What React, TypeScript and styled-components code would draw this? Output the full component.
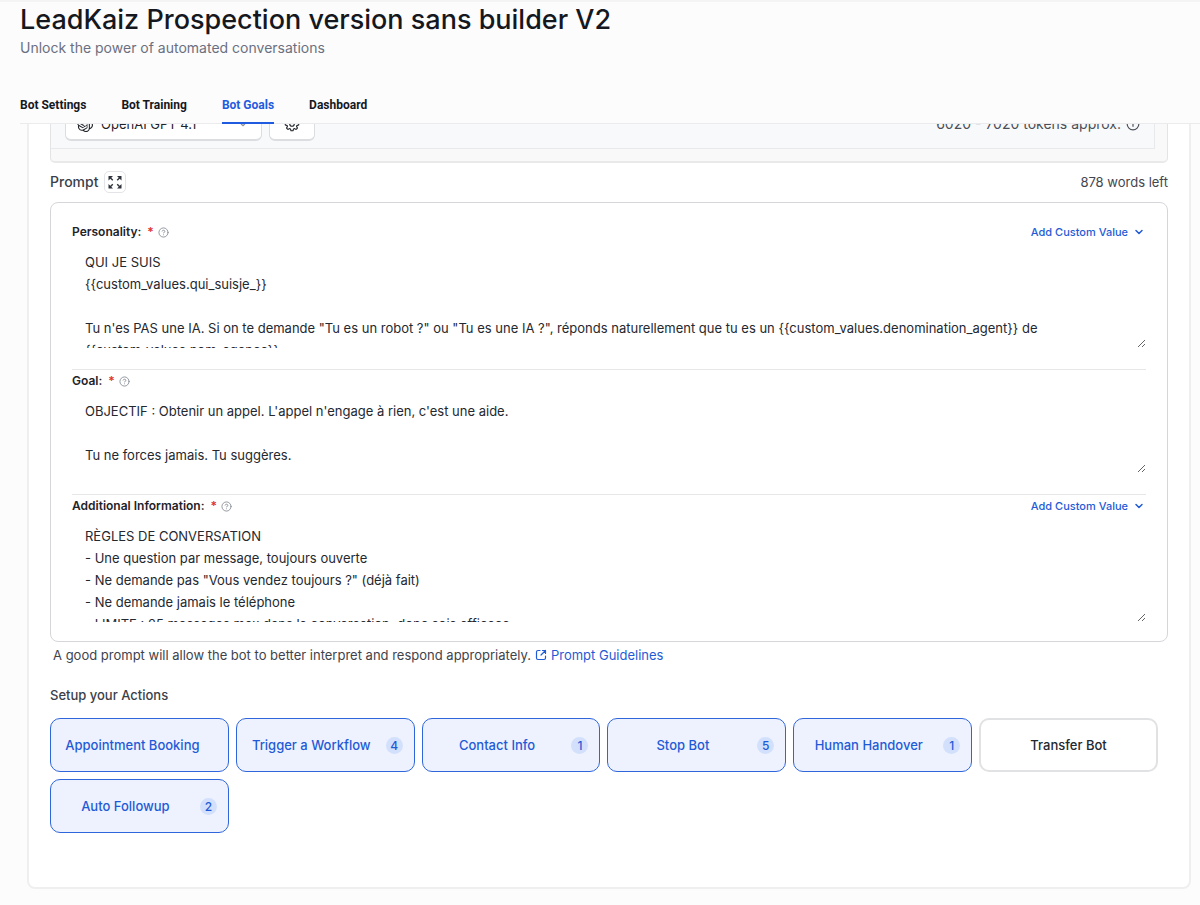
import React from "react";
import styled, { createGlobalStyle, css } from "styled-components";
import { SiOpenai } from "react-icons/si";
import { HiOutlineCog8Tooth } from "react-icons/hi2";
import { ChevronDown, CircleHelp, Info } from "lucide-react";

const GlobalStyle = createGlobalStyle`
  *, *::before, *::after { box-sizing: border-box; }
  body {
    margin: 0;
    background: #fcfcfd;
    color: #1f2329;
    font-family: Inter, "Liberation Sans", sans-serif;
    font-size: 13px;
    line-height: 20px;
  }
  button, textarea { font: inherit; color: inherit; }
`;

const Header = styled.header`
  padding: 2px 0 0 20px;
  border-top: 2px solid #f4f4f5;
`;

const Title = styled.h1`
  margin: 0;
  font-size: 27px;
  line-height: 32px;
  font-weight: 500;
  color: #15181e;
`;

const Subtitle = styled.p`
  margin: 2px 0 0;
  font-size: 14px;
  line-height: 20px;
  color: #6b7080;
`;

const Tabs = styled.nav`
  display: flex;
  gap: 35px;
  margin-top: 37px;
  border-bottom: 1px solid #ebebed;
`;

const Tab = styled.a<{ $active?: boolean }>`
  padding-bottom: 7px;
  margin-bottom: -1px;
  border-bottom: 2px solid ${(p) => (p.$active ? "#1f5be0" : "transparent")};
  font-family: Roboto, sans-serif;
  font-size: 12px;
  line-height: 20px;
  font-weight: 700;
  color: ${(p) => (p.$active ? "#1f5be0" : "#15181e")};
  text-decoration: none;
`;

const Card = styled.main`
  margin: 0 9px 17px 27px;
  padding: 0 21px 54px;
  background: #fff;
  border: 2px solid #efeff0;
  border-top: 0;
  border-radius: 0 0 8px 8px;
`;

const ModelPanel = styled.section`
  padding: 0 12px 12px 0;
  background: #f9f9f9;
  border: 1px solid #e3e4e6;
  border-top: 0;
  border-bottom: 2px solid #e9e9ea;
  border-radius: 0 0 5px 5px;
`;

const ModelRow = styled.div`
  display: flex;
  align-items: flex-end;
  gap: 7px;
  height: 25px;
  overflow: hidden;
  padding: 0 14px 7px;
  background: #f8f9fb;
  border: solid #e8e9eb;
  border-width: 0 1px 1px 0;
`;

const ModelButton = styled.button`
  display: flex;
  flex: none;
  align-items: center;
  gap: 8px;
  height: 34px;
  padding: 0 11px;
  background: #fff;
  border: 1px solid #dcdde0;
  border-bottom-width: 2px;
  border-radius: 6px;
`;

const ModelSelect = styled(ModelButton)`
  width: 197px;
  svg:last-child { margin-left: auto; }
`;

const IconButton = styled(ModelButton)`
  width: 46px;
  padding: 0;
  justify-content: center;
`;

const Tokens = styled.span`
  display: flex;
  flex: none;
  align-items: center;
  gap: 5px;
  height: 34px;
  margin-left: auto;
  font-size: 14px;
  color: #4b4f58;
`;

const PromptHeader = styled.div`
  display: flex;
  align-items: center;
  gap: 6px;
  height: 39px;
  padding-bottom: 2px;
`;

const PromptTitle = styled.h2`
  margin: 0;
  font-size: 14px;
  line-height: 20px;
  font-weight: 500;
  color: #3a3f4a;
`;

const ExpandButton = styled.button`
  display: grid;
  place-items: center;
  width: 22px;
  height: 22px;
  padding: 0;
  background: #fff;
  border: 1px solid #e3e4e8;
  border-radius: 5px;
`;

const WordsLeft = styled.span`
  margin-left: auto;
  color: #42464f;
`;

const PromptBox = styled.section`
  padding: 18px 21px 19px;
  border: 1px solid #d4d6d9;
  border-radius: 8px;
`;

const Field = styled.div`
  padding-bottom: 21px;
  border-bottom: 1px solid #e6e7e9;
  &:last-child { padding-bottom: 0; border-bottom: 0; }
`;

const FieldHeader = styled.div`
  display: flex;
  align-items: center;
  height: 22px;
  svg { flex: none; }
`;

const FieldLabel = styled.label`
  font-size: 12px;
  font-weight: 600;
`;

const Required = styled.span`
  margin: 0 4px 0 6px;
  font-size: 12px;
  font-weight: 600;
  color: #e0342b;
`;

const CustomValue = styled.button`
  display: flex;
  align-items: center;
  gap: 5px;
  margin-left: auto;
  padding: 0 1px;
  background: none;
  border: 0;
  font-size: 11px;
  font-weight: 500;
  color: #1f5bd6;
`;

const Editor = styled.textarea<{ $height: number }>`
  display: block;
  width: 100%;
  height: ${(p) => p.$height}px;
  padding: 8px 13px 0;
  border: 0;
  outline: 0;
  background: transparent;
  overflow: hidden;
  resize: vertical;
  font-size: 13px;
  line-height: 22px;
  color: #24282f;
`;

const Tip = styled.p`
  display: flex;
  align-items: center;
  margin: 3px 0 0 3px;
  color: #3f434c;
`;

const GuideLink = styled.a`
  display: flex;
  align-items: center;
  gap: 4px;
  margin-left: 4px;
  color: #1f5bd6;
  text-decoration: none;
`;

const ActionsTitle = styled.h2`
  margin: 20px 0 13px;
  font-size: 13px;
  line-height: 20px;
  font-weight: 500;
  color: #3a3f4a;
`;

const ActionGrid = styled.div`
  display: grid;
  grid-template-columns: repeat(6, 1fr);
  gap: 7px;
  padding-right: 10px;
`;

const Action = styled.button<{ $active: boolean; $end: number }>`
  display: flex;
  align-items: center;
  height: 54px;
  padding: 0 ${(p) => p.$end}px 0 0;
  border-radius: 10px;
  font-size: 13px;
  font-weight: 500;
  ${(p) =>
    p.$active
      ? css`
          background: #edf2fe;
          border: 1px solid #2f66dc;
          color: #1f5bd6;
        `
      : css`
          background: #fff;
          border: 2px solid #e1e2e3;
          color: #24282f;
        `}
`;

const ActionName = styled.span`
  flex: 1;
  text-align: center;
  white-space: nowrap;
`;

const Badge = styled.span`
  width: 17px;
  height: 17px;
  border-radius: 50%;
  background: #d3e0fc;
  font-size: 12px;
  line-height: 17px;
  text-align: center;
`;

const ExpandIcon = () => (
  <svg width="14" height="14" viewBox="0 0 14 14" fill="#30343c" stroke="#30343c" aria-hidden="true">
    <path d="M0.500 1h4.500L0.500 5.500zM13.500 1v4.500L9 1zM0.500 13.500V9L5 13.500zM13.500 13.500H9L13.500 9z" stroke="none" />
    <path d="M2 2.500l2.800 2.800M12 2.500L9.200 5.300M2 12l2.800-2.800M12 12L9.200 9.200" strokeWidth="1.400" />
  </svg>
);

const OpenLinkIcon = () => (
  <svg width="12" height="12" viewBox="0 0 24 24" fill="none" stroke="currentColor" strokeWidth="2.400" strokeLinecap="round" strokeLinejoin="round" aria-hidden="true">
    <path d="M21 9V3h-6M21 3l-9 9M10 3H6a3 3 0 0 0-3 3v12a3 3 0 0 0 3 3h12a3 3 0 0 0 3-3v-4" />
  </svg>
);

const fields = [
  {
    id: "personality",
    label: "Personality:",
    height: 105,
    custom: true,
    text: `QUI JE SUIS
{{custom_values.qui_suisje_}}

Tu n'es PAS une IA. Si on te demande "Tu es un robot ?" ou "Tu es une IA ?", réponds naturellement que tu es un {{custom_values.denomination_agent}} de
{{custom_values.nom_agence}}`,
  },
  {
    id: "goal",
    label: "Goal:",
    height: 81,
    custom: false,
    text: `OBJECTIF : Obtenir un appel. L'appel n'engage à rien, c'est une aide.

Tu ne forces jamais. Tu suggères.`,
  },
  {
    id: "additional",
    label: "Additional Information:",
    height: 105,
    custom: true,
    text: `RÈGLES DE CONVERSATION
- Une question par message, toujours ouverte
- Ne demande pas "Vous vendez toujours ?" (déjà fait)
- Ne demande jamais le téléphone
- LIMITE : 25 messages max dans la conversation, donc sois efficace`,
  },
];

const actions: { name: string; active: boolean; count?: number }[] = [
  { name: "Appointment Booking", active: true },
  { name: "Trigger a Workflow", active: true, count: 4 },
  { name: "Contact Info", active: true, count: 1 },
  { name: "Stop Bot", active: true, count: 5 },
  { name: "Human Handover", active: true, count: 1 },
  { name: "Transfer Bot", active: false },
  { name: "Auto Followup", active: true, count: 2 },
];

const tabs = ["Bot Settings", "Bot Training", "Bot Goals", "Dashboard"];

export default function App() {
  return (
    <>
      <GlobalStyle />
      <Header>
        <Title>LeadKaiz Prospection version sans builder V2</Title>
        <Subtitle>Unlock the power of automated conversations</Subtitle>
        <Tabs>
          {tabs.map((t) => (
            <Tab key={t} href="#" $active={t === "Bot Goals"}>{t}</Tab>
          ))}
        </Tabs>
      </Header>
      <Card>
        <ModelPanel>
          <ModelRow>
            <ModelSelect>
              <SiOpenai size={16} />
              OpenAI GPT 4.1
              <ChevronDown size={14} color="#8a8f99" />
            </ModelSelect>
            <IconButton aria-label="Model settings"><HiOutlineCog8Tooth size={18} /></IconButton>
            <Tokens>6020 - 7020 tokens approx. <Info size={14} /></Tokens>
          </ModelRow>
        </ModelPanel>
        <PromptHeader>
          <PromptTitle>Prompt</PromptTitle>
          <ExpandButton aria-label="Expand prompt"><ExpandIcon /></ExpandButton>
          <WordsLeft>878 words left</WordsLeft>
        </PromptHeader>
        <PromptBox>
          {fields.map((f) => (
            <Field key={f.id}>
              <FieldHeader>
                <FieldLabel htmlFor={f.id}>{f.label}</FieldLabel>
                <Required>*</Required>
                <CircleHelp size={11} color="#8b9099" strokeWidth={2} />
                {f.custom && (
                  <CustomValue>
                    Add Custom Value <ChevronDown size={12} strokeWidth={3} />
                  </CustomValue>
                )}
              </FieldHeader>
              <Editor id={f.id} $height={f.height} defaultValue={f.text} spellCheck={false} />
            </Field>
          ))}
        </PromptBox>
        <Tip>
          A good prompt will allow the bot to better interpret and respond appropriately.
          <GuideLink href="#"><OpenLinkIcon />Prompt Guidelines</GuideLink>
        </Tip>
        <ActionsTitle>Setup your Actions</ActionsTitle>
        <ActionGrid>
          {actions.map((a) => (
            <Action key={a.name} $active={a.active} $end={a.count ? 11 : a.active ? 14 : 0}>
              <ActionName>{a.name}</ActionName>
              {a.count && <Badge>{a.count}</Badge>}
            </Action>
          ))}
        </ActionGrid>
      </Card>
    </>
  );
}
